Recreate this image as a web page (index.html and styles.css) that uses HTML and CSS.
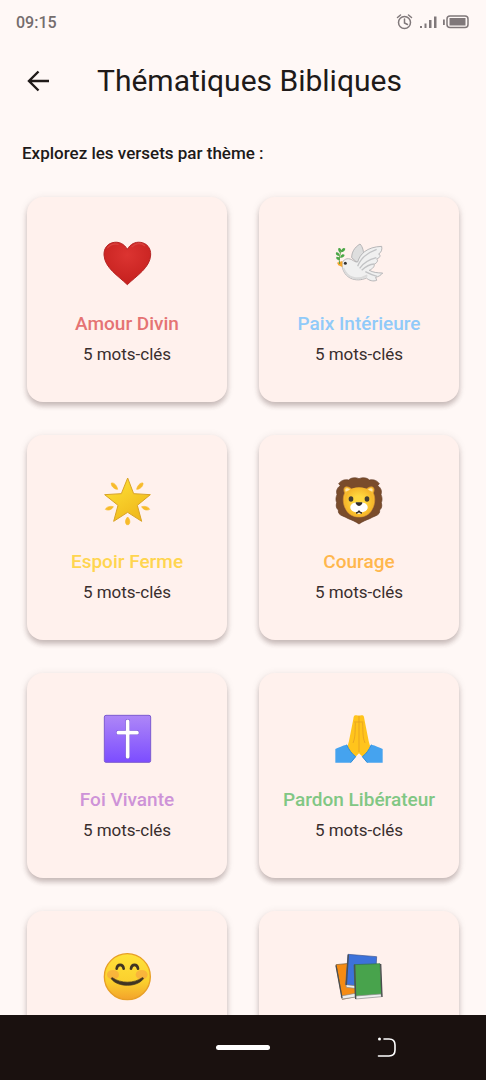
FILE: index.html
```html
<!DOCTYPE html>
<html lang="fr">
<head>
<meta charset="utf-8">
<meta name="viewport" content="width=device-width, initial-scale=1">
<title>Thématiques Bibliques</title>
<link rel="stylesheet" href="styles.css">
</head>
<body>
<div class="status">
  <span>09:15</span>
  <svg class="status-icons" viewBox="0 0 74 18" aria-hidden="true">
    <g fill="none" stroke="#80787a" stroke-width="1.5" stroke-linecap="round">
      <circle cx="8.500" cy="9.500" r="6"/><path d="M8.500 6v4l3 1.500M1.500 4.500l3-2.500M15.500 4.500l-3-2.500"/>
      <rect x="51" y="3" width="21" height="11.500" rx="3"/>
    </g>
    <path fill="#80787a" d="M24 13h2v2h-2zM28.500 10.500h2V15h-2zM33 7h2.500v8H33zM38 3.500h2.500V15H38zM47 6.500h1.800v5.500H47zM53.500 5h16v7.500h-16z"/>
  </svg>
</div>
<header class="bar">
  <button class="back" type="button" aria-label="Retour">
    <svg viewBox="0 0 24 24"><path d="M23 12H3M12.500 2.500L3 12l9.500 9.500" fill="none" stroke="#201a19" stroke-width="2.400"/></svg>
  </button>
  <h1>Thématiques Bibliques</h1>
</header>
<main class="content">
  <h2 class="intro">Explorez les versets par thème :</h2>
  <div class="grid">
    <button class="card" type="button">
      <svg class="emoji" viewBox="0 0 150 150" aria-hidden="true">
        <defs><radialGradient id="h" cx=".5" cy=".3" r=".7"><stop offset="0" stop-color="#dc3431"/><stop offset="1" stop-color="#c5201e"/></radialGradient></defs>
        <path fill="url(#h)" stroke="#b52625" stroke-width="3" d="M76 34C67 18 52 11 37 13 18 15 5 30 6 51c2 38 42 62 70 89 28-27 68-51 70-89 1-21-12-36-31-38-15-2-30 5-39 21z"/>
        <path d="M17 29c8-9 18-13 31-10M90 26c11-11 27-13 38-3" fill="none" stroke="#d8403c" stroke-width="4" stroke-linecap="round"/>
      </svg>
      <span class="name red">Amour Divin</span><span class="count">5 mots-clés</span>
    </button>
    <button class="card" type="button">
      <svg class="emoji" viewBox="0 0 150 150" aria-hidden="true">
        <g stroke="#aaaaac" stroke-width="2.500" stroke-linejoin="round">
          <path fill="#dedede" d="M53 59c0-15 7-30 25-41 8 8 13 24 10 43L72 76z"/>
          <path fill="#f0f0f0" d="M24 78c3-14 16-20 29-13 7 4 12 8 18 7C78 48 98 27 143 25c2 10-1 18-9 23 7 3 5 11-6 15 6 4 1 12-8 16 3 6-4 13-14 18 11 6 23 8 40 8-6 8-14 11-21 13l3 9c-11 4-22 1-31-7-30 14-69 2-73-39z"/>
        </g>
        <path d="M71 85c8-22 24-39 57-51M77 91c12-18 27-26 50-32M83 97c13-12 23-18 37-19M94 101c13 7 24 11 35 14" fill="none" stroke="#c2c3c5" stroke-width="4"/>
        <path d="M28 90c12 32 43 39 72 22" fill="none" stroke="#dadada" stroke-width="6"/>
        <circle cx="34" cy="76" r="4.500" fill="#333"/>
        <path d="M25 69L9 74l4 8 12 5z" fill="#f5a62c"/>
        <path d="M17 78c-3-16-1-28 7-43" fill="none" stroke="#5f9f42" stroke-width="3"/>
        <path fill="#4ba747" d="M16 54C4 54 4 43 8 43c7 1 9 5 8 11zM18 45c-8-9-6-15-2-15 6 2 7 8 2 15zM21 42c2-12 9-14 13-10-1 7-6 10-13 10zM18 59c3-12 11-12 14-8-2 7-7 9-14 8zM17 66c-11 1-12-8-9-10 7 0 11 3 9 10z"/>
      </svg>
      <span class="name blue">Paix Intérieure</span><span class="count">5 mots-clés</span>
    </button>
    <button class="card" type="button">
      <svg class="emoji" viewBox="0 0 150 150" aria-hidden="true">
        <defs><linearGradient id="s" x2=".7" y2="1"><stop offset="0" stop-color="#ffe438"/><stop offset="1" stop-color="#efb71b"/></linearGradient></defs>
        <path fill="url(#s)" stroke="#d9a325" stroke-width="3" stroke-linejoin="round" d="M77 6l18 47 50 3-39 32 13 48-42-27-42 27 13-48L8 56l50-3z"/>
        <path fill="#f7bb2b" d="M28 21c9-2 17 9 19 19-10 0-20-9-19-19zM123 21c-9-2-17 9-19 19 10 0 20-9 19-19zM10 100c5-9 15-10 24-8-4 9-15 13-24 8zM143 100c-5-9-15-10-24-8 4 9 15 13 24 8zM77 123c7 7 9 17 3 23h-6c-6-6-4-16 3-23z" stroke="#f7bb2b" stroke-width="2"/>
      </svg>
      <span class="name yellow">Espoir Ferme</span><span class="count">5 mots-clés</span>
    </button>
    <button class="card" type="button">
      <svg class="emoji" viewBox="0 0 150 150" aria-hidden="true">
        <defs><radialGradient id="l"><stop offset=".4" stop-color="#ffd83f"/><stop offset="1" stop-color="#f6b629"/></radialGradient></defs>
        <path fill="#7a4c2b" stroke="#633d25" stroke-width="2" d="M75 8c-12-5-24-3-31 4-15-3-24 3-30 11l5 6C8 36 6 46 9 56c-4 8-4 17-1 24-3 10-1 17 5 22-1 9 3 14 11 17 7 4 14 5 19 9 10 4 23 9 32 16 9-7 22-12 32-16 5-4 12-5 19-9 8-3 12-8 11-17 6-5 8-12 5-22 3-7 3-16-1-24 3-10 1-20-10-27l5-6c-6-8-15-14-30-11-7-7-19-9-31-4z"/>
        <path fill="#f6bb31" stroke="#d9922c" stroke-width="2" d="M32 51c-8-18 5-25 21-12h44c16-13 29-6 21 12 7 15 5 35-4 50-8 15-22 22-39 22s-31-7-39-22c-9-15-11-35-4-50z"/>
        <path fill="url(#l)" d="M75 34c27 0 43 15 43 41s-15 46-43 46-43-20-43-46 16-41 43-41z"/>
        <path fill="#ffe5aa" d="M35 47c-4-11 4-13 13-6zM115 47c4-11-4-13-13-6z"/>
        <path fill="#fff" d="M75 80c18-3 27 6 26 15-1 10-12 15-20 13v5H69v-5c-8 2-19-3-20-13-1-9 8-18 26-15z"/>
        <ellipse cx="51" cy="69" rx="7" ry="8" fill="#423d34"/><ellipse cx="99" cy="69" rx="7" ry="8" fill="#423d34"/>
        <path fill="#302c2b" d="M65 79h20c1 5-4 10-10 11-6-1-11-6-10-11z"/>
        <path d="M75 104c-1 4-4 7-9 7M75 104c1 4 4 7 9 7" fill="none" stroke="#302c2b" stroke-width="4"/>
      </svg>
      <span class="name orange">Courage</span><span class="count">5 mots-clés</span>
    </button>
    <button class="card" type="button">
      <svg class="emoji" viewBox="0 0 150 150" aria-hidden="true">
        <defs><linearGradient id="c" x2="0" y2="1"><stop offset="0" stop-color="#ae87f7"/><stop offset="1" stop-color="#7c4dff"/></linearGradient></defs>
        <rect x="7" y="4" width="139" height="141" rx="5" fill="url(#c)" stroke="#7c5cd0" stroke-width="3"/>
        <path d="M77 22v106M49 56h56" stroke="#7450d2" stroke-width="14" stroke-linecap="round"/>
        <path d="M77 22v106M49 56h56" stroke="#fff" stroke-width="11" stroke-linecap="round"/>
      </svg>
      <span class="name purple">Foi Vivante</span><span class="count">5 mots-clés</span>
    </button>
    <button class="card" type="button">
      <svg class="emoji" viewBox="0 0 150 150" aria-hidden="true">
        <path fill="#ffc41c" d="M64 4c-4 0-5 4-6 11L45 81l-8 29 24 22 14-14 15 14 22-22-8-29-13-66c-1-7-2-11-6-11-4-1-6 0-10 1-4-1-7-2-11-1z"/>
        <path fill="none" stroke="#e5a023" stroke-width="2.500" d="M75 5v109M64 26c-1 34 0 43-7 61M86 26c1 34 0 43 7 61M60 24h28"/>
        <path fill="#45a3ef" d="M4 105c11-5 21-10 34-13 7 16 16 28 27 36l-15 18H4zM146 105c-11-5-21-10-34-13-7 16-16 28-27 36l15 18h46z"/>
        <path fill="none" stroke="#2f8cd8" stroke-width="3" d="M38 92c7 16 16 28 27 36l-15 18M112 92c-7 16-16 28-27 36l15 18"/>
      </svg>
      <span class="name green">Pardon Libérateur</span><span class="count">5 mots-clés</span>
    </button>
    <button class="card" type="button" aria-label="Visage souriant">
      <svg class="emoji" viewBox="0 0 150 150" aria-hidden="true">
        <defs><linearGradient id="f" x2="0" y2="1"><stop offset="0" stop-color="#ffe23a"/><stop offset=".6" stop-color="#fbd02e"/><stop offset="1" stop-color="#f3a32b"/></linearGradient></defs>
        <circle cx="76" cy="74" r="69" fill="url(#f)" stroke="#e89f25" stroke-width="4"/>
        <ellipse cx="33" cy="68" rx="18" ry="14" fill="#f6854c" opacity=".4"/><ellipse cx="119" cy="68" rx="18" ry="14" fill="#f6854c" opacity=".4"/>
        <path d="M44 50c2-15 19-15 21 0M87 50c2-15 19-15 21 0" fill="none" stroke="#403423" stroke-width="8" stroke-linecap="round"/>
        <path d="M31 77c26 18 64 18 90 0 4 0 4 2 2 5-20 24-74 24-94 0-2-3-1-5 2-5z" fill="#403423" stroke="#403423" stroke-width="2" stroke-linejoin="round"/>
      </svg>
    </button>
    <button class="card" type="button" aria-label="Livres">
      <svg class="emoji" viewBox="0 0 150 150" aria-hidden="true">
        <g stroke-linejoin="round" stroke-width="2">
          <path fill="#f58b13" stroke="#75552c" d="M6 38l60-6 13 99-54 11z"/>
          <path fill="#eee" stroke="#888" d="M21 132l54-10 4 11-54 8z"/>
          <path fill="#3d72da" stroke="#3c5590" d="M42 7l86 7-5 94-88-10z"/>
          <path fill="#eee" stroke="#888" d="M36 98l80 9-2 8-77-9z"/>
          <path fill="#48a34c" stroke="#34713c" d="M60 38l78-3 5 95-79 6z"/>
          <path fill="#eee" stroke="#888" d="M65 132l76-6 2 8-78 7z"/>
        </g>
        <path d="M43 8l-6 91M62 38l3 103M6 40l18 98M140 36l4 99" fill="none" stroke="#4c4e50" stroke-width="4"/>
      </svg>
    </button>
  </div>
</main>
<nav class="nav">
  <span></span>
  <button class="home" type="button" aria-label="Accueil"></button>
  <button class="recent" type="button" aria-label="Précédent">
    <svg viewBox="0 0 20 22"><path d="M7 2h5c4 0 6 2 6 6v5c0 4-2 6-6 6H1.500" fill="none" stroke="#fff" stroke-width="1.600" stroke-linecap="round"/><circle cx="2.500" cy="2" r="1.500" fill="#fff"/></svg>
  </button>
</nav>
</body>
</html>
```
FILE: styles.css
```css
* { box-sizing: border-box; }
body {
  margin: 0;
  height: 100vh;
  display: flex;
  flex-direction: column;
  overflow: hidden;
  background: #fff8f6;
  color: #201a19;
  font-family: Roboto, sans-serif;
}
button { border: 0; padding: 0; background: none; font: inherit; color: inherit; }
svg { display: block; }
h1, h2 { margin: 0; }
.status {
  flex: none;
  display: flex;
  justify-content: space-between;
  align-items: center;
  height: 44px;
  padding: 0 16px;
  font-size: 16px;
  font-weight: 500;
  color: #756d6d;
}
.status-icons { width: 74px; height: 18px; }
.bar { flex: none; display: flex; align-items: center; height: 74px; padding: 0 26px; }
.back { width: 24px; height: 24px; margin-right: 47px; }
.bar h1 { font-size: 30px; line-height: 40px; font-weight: 400; }
.content { flex: 1; min-height: 0; overflow: hidden; padding: 23px 27px 0; }
.intro { margin: 0 -5px 32px; font-size: 17px; line-height: 24px; font-weight: 500; }
.grid { display: grid; grid-template-columns: 1fr 1fr; gap: 33px 32px; }
.card {
  display: flex;
  flex-direction: column;
  align-items: center;
  height: 205px;
  padding-top: 41px;
  border-radius: 16px;
  background: #fff1ed;
  box-shadow: 0 4px 5px rgb(60 30 30 / 24%), 0 1px 8px rgb(60 30 30 / 9%);
}
.emoji { width: 50px; height: 50px; margin-bottom: 24px; }
.name { font-size: 19px; line-height: 24px; font-weight: 500; margin-bottom: 8px; white-space: nowrap; }
.count { font-size: 17px; line-height: 20px; color: #392e2d; }
.red { color: #e57373; }
.blue { color: #90caf9; }
.yellow { color: #ffd54f; }
.orange { color: #ffb74d; }
.purple { color: #ce93d8; }
.green { color: #81c784; }
.nav {
  flex: none;
  display: grid;
  grid-template-columns: 1fr 54px 1fr;
  align-items: center;
  height: 65px;
  background: #1a110f;
}
.home { height: 5px; border-radius: 3px; background: #fff; }
.recent { justify-self: center; width: 38px; height: 22px; padding-left: 18px; }
.recent svg, .back svg { width: 100%; height: 100%; }
```
